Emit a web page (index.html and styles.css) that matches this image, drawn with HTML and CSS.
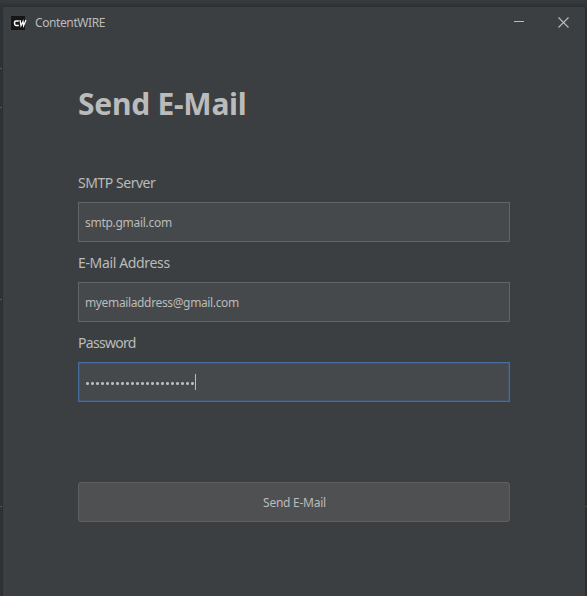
FILE: index.html
```html
<!DOCTYPE html>
<html lang="en">
<head>
<meta charset="utf-8">
<title>ContentWIRE</title>
<link rel="stylesheet" href="styles.css">
</head>
<body>
<div class="tick tick-a"></div><div class="tick tick-b"></div><div class="tick tick-c"></div><div class="tick tick-d"></div><div class="tick tick-e"></div>
<main class="window">
  <header class="titlebar">
    <span class="logo"><svg width="17" height="14" viewBox="0 0 17 14"><path d="M0 0h14v14H0z" fill="#161616"/><path d="M7.800 5H5Q3.600 5 3.600 6.300V8Q3.600 9.400 5 9.400H7.800" fill="none" stroke="#fff" stroke-width="1.5"/><path d="M9 4L10 9.700L12 5.500L12.600 9.700L15 4" fill="none" stroke="#fff" stroke-width="1.3"/></svg></span>
    <span class="app-name">ContentWIRE</span>
    <svg class="minimize" width="10" height="12" viewBox="0 0 10 12"><path d="M0 4.500h10" stroke="#bbb"/></svg>
    <svg class="close" width="11" height="12" viewBox="0 0 11 12"><path d="M.5 .5l10 10M10.500 .5l-10 10" stroke="#bbb" stroke-width="1.1"/></svg>
  </header>
  <form class="form">
    <h1 class="heading">Send E-Mail</h1>
    <div class="label label-smtp">SMTP Server</div>
    <div class="field"><span class="value-smtp">smtp.gmail.com</span></div>
    <div class="label label-mail">E-Mail Address</div>
    <div class="field"><span class="value-mail">myemailaddress@gmail.com</span></div>
    <div class="label label-pass">Password</div>
    <div class="field focused"><span class="dots"></span><span class="caret"></span></div>
    <div class="send"><span>Send E-Mail</span></div>
  </form>
</main>
</body>
</html>
```
FILE: styles.css
```css
* { box-sizing: border-box; }
body {
  margin: 0;
  width: 587px;
  height: 596px;
  padding: 7px 2px 0 3px;
  overflow: hidden;
  background: linear-gradient(#373b3d 0, #303335 7px, #303335 100%);
  font-family: "Noto Sans", "Open Sans", sans-serif;
  font-size: 12px;
  color: #bbb;
  position: relative;
}
.tick { position: absolute; left: 0; width: 2px; height: 1px; background: #555859; }
.tick-a { top: 68px; }
.tick-b { top: 107px; }
.tick-c { top: 299px; }
.tick-d { top: 506px; }
.tick-e { top: 506px; left: auto; right: 0; }
.window { height: 589px; background: #3c3f41; box-shadow: 0 0 2px #282a2b; position: relative; }
.titlebar { height: 31px; display: flex; align-items: center; padding: 0 16.5px 0 8px; }
.logo { display: flex; width: 24px; margin-top: 1px; }
.app-name { letter-spacing: -0.4px; line-height: 17px; }
.minimize { margin-left: auto; margin-right: 33.5px; }
.form { padding: 0 75px; }
.heading { margin: 46px 0 0; height: 40px; line-height: 40px; font-size: 30px; font-weight: 700; letter-spacing: -0.25px; }
.label { font-size: 14px; height: 20px; line-height: 20px; margin: 11px 0 9px; white-space: nowrap; }
.label-smtp { margin-top: 49px; letter-spacing: -0.46px; }
.label-mail { letter-spacing: -0.35px; }
.label-pass { letter-spacing: -0.7px; }
.field { height: 40px; border: 1px solid #646464; background: #45494b; display: flex; align-items: center; padding-left: 6px; }
.value-smtp { letter-spacing: -0.28px; }
.value-mail { letter-spacing: -0.36px; }
.focused { border-color: #466d9c; box-shadow: inset 0 0 0 1px #3f556f; }
.dots { width: 110px; height: 3px; margin-top: 2px; background: radial-gradient(circle at 2.5px 1.5px, #bbb 1.1px, transparent 1.9px) 0 0 / 5px 3px; }
.caret { width: 1px; height: 16px; background: #bbb; }
.send { margin-top: 80px; height: 40px; border: 1px solid #5e6060; border-radius: 3px; background: #4e5052; display: flex; align-items: center; justify-content: center; letter-spacing: -0.25px; padding-left: 1px; }
```
